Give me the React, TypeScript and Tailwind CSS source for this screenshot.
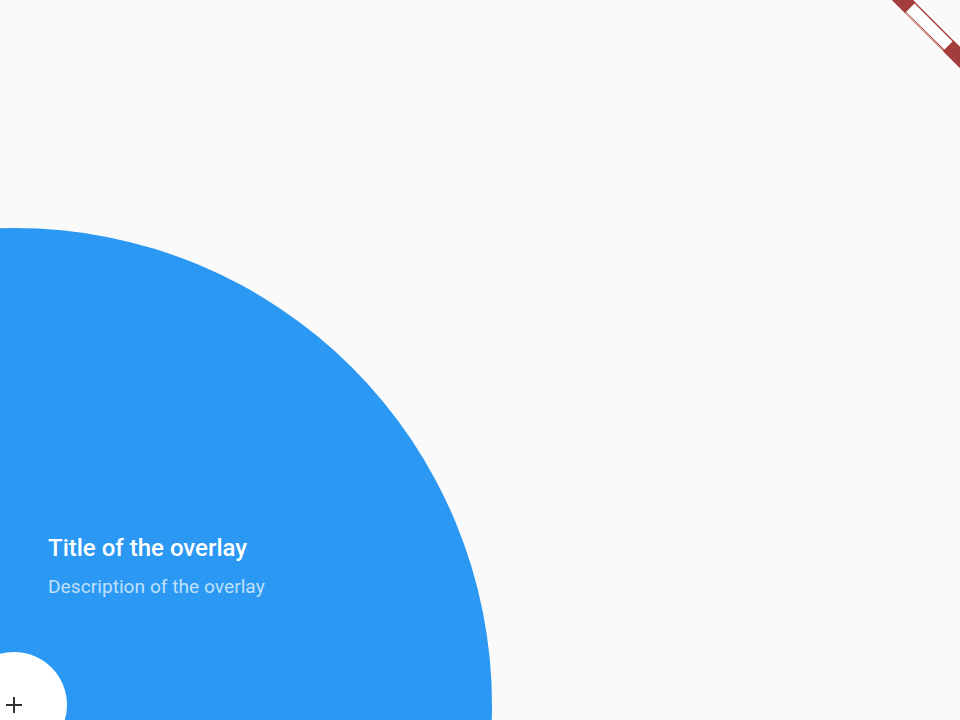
import React from "react";

function DebugBanner() {
  return (
    <svg
      className="absolute top-0 right-0"
      width={68}
      height={68}
      viewBox="892 0 68 68"
    >
      <polygon points="892,0 913,0 960,47 960,68" fill="#a33d3b" />
      <polygon points="894,0 911,0 960,49 960,65" fill="#ffffff" />
      <line x1="893" y1="0" x2="960" y2="67" stroke="#d9a9a7" strokeWidth="1" />
      <polygon points="892,0 913,0 915.5,2.5 905,13" fill="#a33d3b" />
      <polygon points="953.5,40.5 960,47 960,68 943,51" fill="#a33d3b" />
    </svg>
  );
}

export default function App() {
  return (
    <div
      className="relative h-[720px] w-full overflow-hidden bg-[#fafafa]"
      style={{ fontFamily: "Roboto, 'Noto Sans', sans-serif" }}
    >
      {/* outer overlay circle */}
      <div className="absolute left-[-462px] top-[228px] h-[954px] w-[954px] rounded-full bg-[#2b98f3]" />

      {/* overlay text */}
      <div className="absolute left-[48px] top-[534px] flex flex-col gap-[13px]">
        <h1 className="text-[24px] font-medium leading-[28px] text-white">
          Title of the overlay
        </h1>
        <p className="text-[19.2px] leading-[24px] text-[#bfe0fb]">
          Description of the overlay
        </p>
      </div>

      {/* target */}
      <div className="absolute left-[-39px] top-[652px] flex h-[106px] w-[106px] items-center justify-center rounded-full bg-white">
        <svg width={18} height={18} viewBox="0 0 18 18">
          <path d="M9 1v16M1 9h16" stroke="#333" strokeWidth="2" fill="none" />
        </svg>
      </div>

      <DebugBanner />
    </div>
  );
}
